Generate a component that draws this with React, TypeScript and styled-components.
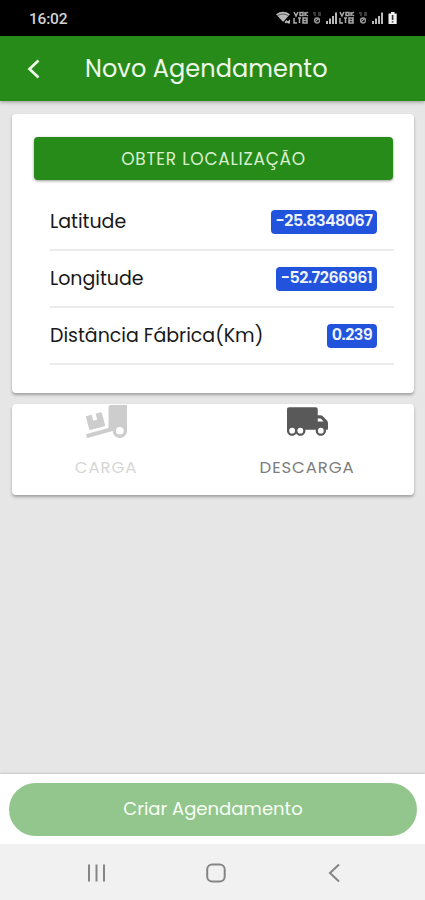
import React from 'react';
import styled, { createGlobalStyle } from 'styled-components';
import { FaTruckLoading, FaTruckMoving } from 'react-icons/fa';

const GlobalStyle = createGlobalStyle`
  * { box-sizing: border-box; }
  body { margin: 0; background: #e6e6e6; }
`;

const Screen = styled.div`
  display: flex;
  flex-direction: column;
  width: 425px;
  height: 900px;
  overflow: hidden;
  background: #e6e6e6;
  font-family: Poppins, Inter, sans-serif;
`;

const StatusBar = styled.div`
  flex: none;
  display: flex;
  align-items: center;
  justify-content: space-between;
  height: 36px;
  padding: 0 26px 0 29px;
  background: #000;
`;

const Clock = styled.span`
  padding-top: 1px;
  font: 500 15.5px/20px Roboto, sans-serif;
  letter-spacing: -0.2px;
  color: #d2d2d2;
`;

const Header = styled.header`
  flex: none;
  display: flex;
  align-items: center;
  height: 65px;
  padding-left: 26px;
  background: #278b19;
  box-shadow: 0 1px 4px rgba(0, 0, 0, 0.35);
`;

const Title = styled.h1`
  margin: 1px 0 0 43px;
  font-size: 24px;
  font-weight: 400;
  line-height: 34px;
  letter-spacing: 0.06px;
  color: #edf8e9;
  white-space: nowrap;
`;

const Content = styled.main`
  flex: 1;
  display: flex;
  flex-direction: column;
  gap: 11px;
  padding: 13px 11px 0 12px;
`;

const Card = styled.section`
  border-radius: 4px;
  background: #fff;
  box-shadow: 0 2px 3px rgba(0, 0, 0, 0.3);
`;

const LocationCard = styled(Card)`
  height: 279px;
  padding: 23px 20px 0 22px;
`;

const LocateButton = styled.button`
  display: flex;
  align-items: center;
  justify-content: center;
  width: 359px;
  height: 43px;
  padding: 0;
  border: 0;
  border-radius: 4px;
  background: #278b19;
  box-shadow: 0 1px 3px rgba(0, 0, 0, 0.4);
  color: #d9f0d2;
  font: inherit;
  font-size: 17px;
  letter-spacing: 0.75px;
`;

const Rows = styled.div`
  padding-top: 14px;
  margin-left: 16px;
`;

const Row = styled.div`
  display: flex;
  align-items: center;
  justify-content: space-between;
  height: 57px;
  padding-right: 17px;
  border-bottom: 2px solid #ebebeb;
`;

const Label = styled.span`
  font-size: 19px;
  line-height: 28px;
  letter-spacing: -0.02px;
  color: #181818;
  white-space: nowrap;
`;

const Badge = styled.span<{ $width: number }>`
  display: flex;
  align-items: flex-start;
  justify-content: center;
  width: ${p => p.$width}px;
  height: 24px;
  border-radius: 4px;
  background: #2153dd;
  color: #eff4ff;
  font-size: 16px;
  font-weight: 600;
  line-height: 21px;
  letter-spacing: -0.55px;
  white-space: nowrap;
`;

const ModeCard = styled(Card)`
  display: grid;
  grid-template-columns: 1fr 1fr;
  height: 91px;
`;

const Mode = styled.button<{ $color: string; $textColor: string }>`
  display: flex;
  flex-direction: column;
  align-items: center;
  padding: 1px 13px 0 0;
  border: 0;
  background: none;
  color: ${p => p.$textColor};
  font: inherit;
  font-size: 16.5px;
  font-weight: 400;
  letter-spacing: 0.9px;

  > svg { display: block; width: 41px; height: 33px; margin-bottom: 18px; color: ${p => p.$color}; }
  span { line-height: 24px; }
`;

const Footer = styled.footer`
  flex: none;
  height: 70px;
  padding: 9px 8px 0 9px;
  background: #fff;
  box-shadow: 0 -1px 2px rgba(0, 0, 0, 0.14);
`;

const CreateButton = styled.button`
  width: 100%;
  height: 53px;
  padding: 0 0 2px;
  border: 0;
  border-radius: 27px;
  background: #93c68d;
  color: #f8fff5;
  font: inherit;
  font-size: 18px;
`;

const NavBar = styled.nav`
  flex: none;
  display: flex;
  align-items: center;
  justify-content: space-between;
  height: 56px;
  padding: 2px 84px 0 86px;
  background: #f1f1f1;

  svg { fill: none; stroke: #858585; stroke-width: 2; }
`;

const SignalIcons = () => (
  <svg width="124" height="16" viewBox="0 0 124 16" fill="#b9b9b9">
    <path d="M1 4.2Q8 -.6 15 4.2L8.5 11.5H7.7Z" />
    <path d="M2.2 5.8Q8 2.2 13.5 5.8" fill="none" stroke="#333" strokeWidth=".7" />
    <path d="M9.5 12l2-2 1.2 1.2L15 9.5v4h-2l-1-1-1 1Z" />
    {[18, 64].map(x => (
      <g key={x} transform={`translate(${x} 0)`} fill="none" stroke="#aaa" strokeWidth="1.5">
        <path d="M1 2l2 4 2-4M7 2.5h3v3H7zM12 2v4M12 4l3-2M12 4l3 2" />
        <path d="M1 8v5h3M5 8h3M6.5 8v5M10 8h4v5h-4zM10 10.5h4" />
      </g>
    ))}
    {[37, 83].map(x => (
      <g key={x} transform={`translate(${x} 0)`} fill="none">
        <path d="M1 3h3M2 5h2M6 3h3M6 5h3" stroke="#4d4d4d" strokeWidth="1.4" />
        <circle cx="5" cy="10.5" r="2.5" stroke="#999" strokeWidth="1.3" />
        <path d="M3 12l4-4" stroke="#999" strokeWidth="1.2" />
      </g>
    ))}
    {[51, 97].map(x => (
      <path key={x} d="M0 11h2v3H0zM3 8.5h2V14H3zM6 6h2v8H6zM9 2.5h2V14H9z" transform={`translate(${x} 0)`} />
    ))}
    <path d="M116 2h3.5v1.5h2.2V14h-8.2V3.5h2.5z" fill="#f1f1f1" />
    <path d="M117.6 5v5M117.6 11.2v1.2" stroke="#333" strokeWidth="1.6" />
  </svg>
);

const LoadingIcon = () => (
  <svg viewBox="0 0 640 512">
    <FaTruckLoading size={640} y={-64} />
    <circle cx="528" cy="400" r="60" fill="#fff" />
  </svg>
);

const MovingIcon = () => (
  <svg viewBox="0 0 640 512">
    <FaTruckMoving size={640} y={-64} />
    {[80, 208, 528].map(cx => (
      <circle key={cx} cx={cx} cy="400" r="45" fill="#fff" />
    ))}
  </svg>
);

const readings = [
  { label: 'Latitude', value: '-25.8348067', width: 106 },
  { label: 'Longitude', value: '-52.7266961', width: 101 },
  { label: 'Distância Fábrica(Km)', value: '0.239', width: 50 },
];

export default function App() {
  return (
    <>
      <GlobalStyle />
      <Screen>
        <StatusBar>
          <Clock>16:02</Clock>
          <SignalIcons />
        </StatusBar>
        <Header>
          <svg width="16" height="22" viewBox="0 0 16 22" fill="none" stroke="#edf8e9" strokeWidth="2.7">
            <path d="M12.5 2.5L3.5 11l9 8.5" />
          </svg>
          <Title>Novo Agendamento</Title>
        </Header>
        <Content>
          <LocationCard>
            <LocateButton>OBTER LOCALIZAÇÃO</LocateButton>
            <Rows>
              {readings.map(r => (
                <Row key={r.label}>
                  <Label>{r.label}</Label>
                  <Badge $width={r.width}>{r.value}</Badge>
                </Row>
              ))}
            </Rows>
          </LocationCard>
          <ModeCard>
            <Mode $color="#cdcdcd" $textColor="#d6d6d6">
              <LoadingIcon />
              <span>CARGA</span>
            </Mode>
            <Mode $color="#595959" $textColor="#7c7c7c">
              <MovingIcon />
              <span>DESCARGA</span>
            </Mode>
          </ModeCard>
        </Content>
        <Footer>
          <CreateButton>Criar Agendamento</CreateButton>
        </Footer>
        <NavBar>
          <svg width="20" height="20" viewBox="0 0 20 20"><path d="M3 1.5v17M10.5 1.5v17M18 1.5v17" /></svg>
          <svg width="22" height="20" viewBox="0 0 22 20"><rect x="1.2" y="1.5" width="17.5" height="17" rx="5" /></svg>
          <svg width="14" height="20" viewBox="0 0 14 20"><path d="M12 1.5L3 10l9 8.5" /></svg>
        </NavBar>
      </Screen>
    </>
  );
}
